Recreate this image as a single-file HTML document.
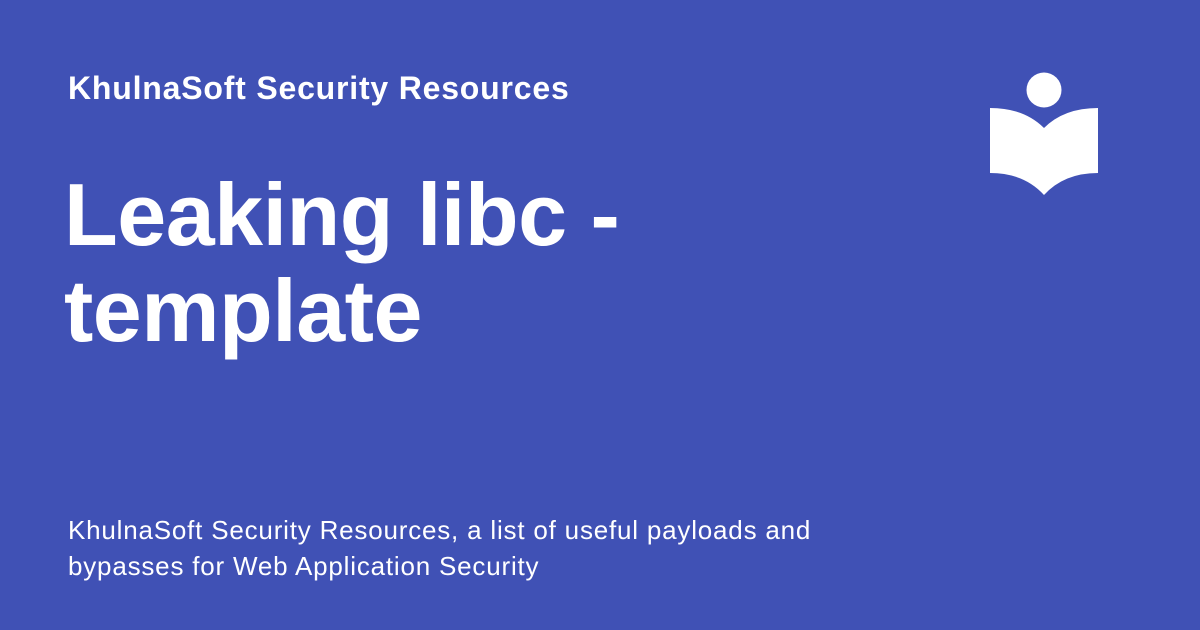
<!DOCTYPE html>
<html><head><meta charset="utf-8"><style>
html,body{margin:0;padding:0}
body{width:1200px;height:630px;background:#4051b5;position:relative;overflow:hidden;font-family:"Liberation Sans",sans-serif;color:#fff}
.site{position:absolute;left:68px;top:70px;font-size:32px;font-weight:bold;white-space:nowrap;letter-spacing:0.8px}
.title{position:absolute;left:64px;top:167px;font-size:88px;font-weight:bold;line-height:96px;letter-spacing:-0.5px}
.desc{position:absolute;left:68px;top:512px;font-size:26px;line-height:36px;letter-spacing:0.8px;white-space:nowrap}
svg{position:absolute;left:0;top:0}
</style></head><body>
<div class="site">KhulnaSoft Security Resources</div>
<div class="title">Leaking libc -<br>template</div>
<div class="desc">KhulnaSoft Security Resources, a list of useful payloads and<br>bypasses for Web Application Security</div>
<svg width="1200" height="630"><circle cx="1044" cy="90" r="17.5" fill="#fff"/>
<path d="M990 108 Q1024 108 1044 128 Q1064 108 1098 108 L1098 173 Q1064 173 1044 195 Q1024 173 990 173 Z" fill="#fff"/></svg>
</body></html>
